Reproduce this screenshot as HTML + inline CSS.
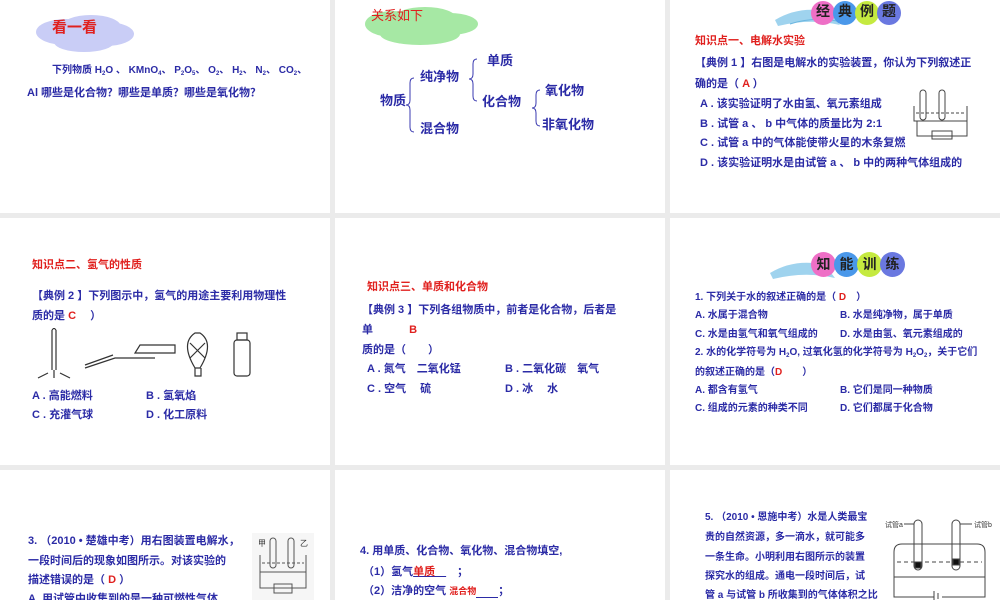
<!DOCTYPE html>
<html><head><meta charset="utf-8">
<style>
*{margin:0;padding:0;box-sizing:border-box}
body{width:1000px;height:600px;background:#ebebeb;position:relative;overflow:hidden;font-family:"Liberation Sans","Noto Sans CJK SC",sans-serif}
.p{position:absolute;background:#fff;overflow:hidden}
.t{position:absolute;white-space:nowrap;font-size:11px;color:#2b2ba6;line-height:1;font-weight:bold}
.r{color:#e0201e}
.big{font-size:13px}
sub{font-size:6px;vertical-align:-2px}
.c{position:absolute;border-radius:50%;color:#222;font-weight:bold;font-size:14px;text-align:center}
</style></head><body>
<!-- panel 1 -->
<div class="p" style="left:0;top:0;width:330px;height:213px">
 <svg style="position:absolute;left:36px;top:12px" width="100" height="42"><g fill="#c9cdf6"><ellipse cx="30" cy="20" rx="30" ry="13"/><ellipse cx="55" cy="15" rx="30" ry="12"/><ellipse cx="70" cy="22" rx="28" ry="12"/><ellipse cx="48" cy="30" rx="30" ry="10"/></g></svg>
 <div class="t r" style="left:52px;top:20px;font-size:15px">看一看</div>
 <div class="t" style="left:52px;top:66px;font-size:10px">下列物质 H<sub>2</sub>O 、 KMnO<sub>4</sub>、 P<sub>2</sub>O<sub>5</sub>、 O<sub>2</sub>、 H<sub>2</sub>、 N<sub>2</sub>、 CO<sub>2</sub>、</div>
 <div class="t" style="left:27px;top:88px">Al 哪些是化合物？哪些是单质？哪些是氧化物？</div>
</div>
<!-- panel 2 -->
<div class="p" style="left:335px;top:0;width:330px;height:213px">
 <svg style="position:absolute;left:30px;top:4px" width="115" height="42"><g fill="#a6e8a4"><ellipse cx="28" cy="20" rx="28" ry="13"/><ellipse cx="60" cy="15" rx="32" ry="12"/><ellipse cx="85" cy="20" rx="28" ry="11"/><ellipse cx="55" cy="30" rx="40" ry="11"/></g></svg>
 <div class="t r" style="left:36px;top:9px;font-size:13px;font-weight:normal">关系如下</div>
 <svg style="position:absolute;left:0;top:0" width="330" height="213" fill="none" stroke="#3a3ab0" stroke-width="1">
  <path d="M79 78 q-4 0 -4 5 v17 q0 5 -4 5 q4 0 4 5 v17 q0 5 4 5"/>
  <path d="M142 59 q-4 0 -4 5 v10 q0 5 -4 5 q4 0 4 5 v12 q0 5 4 5"/>
  <path d="M205 90 q-4 0 -4 5 v8 q0 5 -4 5 q4 0 4 5 v8 q0 5 4 5"/>
 </svg>
 <div class="t big" style="left:45px;top:94px">物质</div>
 <div class="t big" style="left:85px;top:70px">纯净物</div>
 <div class="t big" style="left:85px;top:122px">混合物</div>
 <div class="t big" style="left:152px;top:54px">单质</div>
 <div class="t big" style="left:147px;top:95px">化合物</div>
 <div class="t big" style="left:210px;top:84px">氧化物</div>
 <div class="t big" style="left:207px;top:118px">非氧化物</div>
</div>
<!-- panel 3 -->
<div class="p" style="left:670px;top:0;width:330px;height:213px">
 <svg style="position:absolute;left:100px;top:0" width="80" height="30"><path d="M5 20 Q30 5 60 12 L70 25 Q40 18 8 26 Z" fill="#9fd3ee"/><path d="M20 24 Q45 16 72 22" stroke="#6bb6e0" fill="none"/></svg>
 <div class="c" style="left:141px;top:1px;width:24px;height:24px;background:#ee6fc6">经</div>
 <div class="c" style="left:163px;top:1px;width:24px;height:24px;background:#4a98ea">典</div>
 <div class="c" style="left:185px;top:1px;width:24px;height:24px;background:#c5ea40">例</div>
 <div class="c" style="left:207px;top:1px;width:24px;height:24px;background:#6a78e0">题</div>
 <div class="t r" style="left:25px;top:36px">知识点一、电解水实验</div>
 <div class="t" style="left:25px;top:58px">【典例 1 】右图是电解水的实验装置，你认为下列叙述正</div>
 <div class="t" style="left:25px;top:79px">确的是（ <span class="r">A</span> ）</div>
 <div class="t" style="left:30px;top:99px">A . 该实验证明了水由氢、氧元素组成</div>
 <div class="t" style="left:30px;top:119px">B . 试管 a 、 b 中气体的质量比为 2:1</div>
 <div class="t" style="left:30px;top:138px">C . 试管 a 中的气体能使带火星的木条复燃</div>
 <div class="t" style="left:30px;top:158px">D . 该实验证明水是由试管 a 、 b 中的两种气体组成的</div>
 <svg style="position:absolute;left:242px;top:86px" width="60" height="56" fill="none" stroke="#444" stroke-width="1"><rect x="8" y="4" width="6" height="30" rx="3"/><rect x="27" y="4" width="6" height="30" rx="3"/><path d="M2 20 v15 h53 v-15"/><path d="M4 27 h50" stroke-dasharray="3 2"/><path d="M5 35 v15 h50 v-15"/><rect x="20" y="45" width="20" height="8"/></svg>
</div>
<!-- row 2 -->
<div class="p" style="left:0;top:218px;width:330px;height:247px">
 <div class="t r" style="left:32px;top:42px">知识点二、氢气的性质</div>
 <div class="t" style="left:32px;top:73px">【典例 2 】下列图示中，氢气的用途主要利用物理性</div>
 <div class="t" style="left:32px;top:93px">质的是 <span class="r">C</span>　 ）</div>
 <svg style="position:absolute;left:30px;top:110px" width="240" height="55" fill="none" stroke="#333" stroke-width="1.2">
  <path d="M22 2 v40 M26 2 v40 M22 2 l2 -2 l2 2 M18 45 l-10 5 M30 45 l10 5 M24 42 v8"/>
  <path d="M55 40 l30 -10 h40 M55 37 l28 -10 M105 25 h40 v-8 h-35 z"/>
  <path d="M165 5 q-15 10 0 35 h5 q15 -25 0 -35 z M165 40 v8 h6 v-8"/><path d="M160 15 l15 15 M175 15 l-15 15"/>
  <rect x="204" y="12" width="16" height="36" rx="3"/><rect x="207" y="5" width="10" height="7"/>
 </svg>
 <div class="t" style="left:32px;top:173px">A . 高能燃料</div>
 <div class="t" style="left:146px;top:173px">B . 氢氧焰</div>
 <div class="t" style="left:32px;top:192px">C . 充灌气球</div>
 <div class="t" style="left:146px;top:192px">D . 化工原料</div>
</div>
<div class="p" style="left:335px;top:218px;width:330px;height:247px">
 <div class="t r" style="left:32px;top:64px">知识点三、单质和化合物</div>
 <div class="t" style="left:27px;top:87px">【典例 3 】下列各组物质中，前者是化合物，后者是</div>
 <div class="t" style="left:27px;top:107px">单　　　 <span class="r">B</span></div>
 <div class="t" style="left:27px;top:127px">质的是（　　）</div>
 <div class="t" style="left:32px;top:146px">A . 氮气　二氧化锰</div>
 <div class="t" style="left:170px;top:146px">B . 二氧化碳　氧气</div>
 <div class="t" style="left:32px;top:166px">C . 空气　 硫</div>
 <div class="t" style="left:170px;top:166px">D . 冰　 水</div>
</div>
<div class="p" style="left:670px;top:218px;width:330px;height:247px">
 <svg style="position:absolute;left:95px;top:35px" width="80" height="30"><path d="M5 20 Q30 5 60 12 L70 25 Q40 18 8 26 Z" fill="#9fd3ee"/></svg>
 <div class="c" style="left:141px;top:34px;width:25px;height:25px;background:#ee6fc6;line-height:25px">知</div>
 <div class="c" style="left:164px;top:34px;width:25px;height:25px;background:#4a98ea;line-height:25px">能</div>
 <div class="c" style="left:187px;top:34px;width:25px;height:25px;background:#c5ea40;line-height:25px">训</div>
 <div class="c" style="left:210px;top:34px;width:25px;height:25px;background:#6a78e0;line-height:25px">练</div>
 <div class="t" style="left:25px;top:75px;font-size:10px">1. 下列关于水的叙述正确的是（ <span class="r">D</span>　）</div>
 <div class="t" style="left:25px;top:93px;font-size:10px">A. 水属于混合物</div>
 <div class="t" style="left:170px;top:93px;font-size:10px">B. 水是纯净物，属于单质</div>
 <div class="t" style="left:25px;top:112px;font-size:10px">C. 水是由氢气和氧气组成的</div>
 <div class="t" style="left:170px;top:112px;font-size:10px">D. 水是由氢、氧元素组成的</div>
 <div class="t" style="left:25px;top:130px;font-size:10px">2. 水的化学符号为 H<sub>2</sub>O, 过氧化氢的化学符号为 H<sub>2</sub>O<sub>2</sub>，关于它们</div>
 <div class="t" style="left:25px;top:150px;font-size:10px">的叙述正确的是（<span class="r">D</span>　　）</div>
 <div class="t" style="left:25px;top:168px;font-size:10px">A. 都含有氢气</div>
 <div class="t" style="left:170px;top:168px;font-size:10px">B. 它们是同一种物质</div>
 <div class="t" style="left:25px;top:186px;font-size:10px">C. 组成的元素的种类不同</div>
 <div class="t" style="left:170px;top:186px;font-size:10px">D. 它们都属于化合物</div>
</div>
<!-- row 3 -->
<div class="p" style="left:0;top:470px;width:330px;height:130px">
 <div class="t" style="left:28px;top:66px">3. （2010 • 楚雄中考）用右图装置电解水，</div>
 <div class="t" style="left:28px;top:86px">一段时间后的现象如图所示。对该实验的</div>
 <div class="t" style="left:28px;top:105px">描述错误的是（ <span class="r">D</span> ）</div>
 <div class="t" style="left:28px;top:124px">A. 用试管中收集到的是一种可燃性气体</div>
 <svg style="position:absolute;left:252px;top:63px" width="62" height="67" fill="none" stroke="#555" stroke-width="1"><rect x="0" y="0" width="62" height="67" fill="#f6f6f6" stroke="none"/><text x="6" y="13" font-size="8" fill="#333" stroke="none">甲</text><text x="48" y="13" font-size="8" fill="#333" stroke="none">乙</text><rect x="18" y="5" width="6" height="30" rx="3"/><rect x="36" y="5" width="6" height="30" rx="3"/><path d="M8 22 v17 h46 v-17"/><path d="M10 30 h42" stroke-dasharray="3 2"/><path d="M8 39 v16 h46 v-16"/><rect x="22" y="51" width="18" height="9"/></svg>
</div>
<div class="p" style="left:335px;top:470px;width:330px;height:130px">
 <div class="t" style="left:25px;top:76px">4. 用单质、化合物、氧化物、混合物填空,</div>
 <div class="t" style="left:28px;top:97px">（1）氢气<span class="r" style="text-decoration:underline;text-decoration-color:#2b2ba6">单质　</span>　；</div>
 <div class="t" style="left:28px;top:116px">（2）洁净的空气 <span class="r" style="font-size:9px">混合物</span><span style="border-bottom:1px solid #2b2ba6">　　</span>；</div>
</div>
<div class="p" style="left:670px;top:470px;width:330px;height:130px">
 <div class="t" style="left:35px;top:43px;font-size:10px">5. （2010 • 恩施中考）水是人类最宝</div>
 <div class="t" style="left:35px;top:63px;font-size:10px">贵的自然资源，多一滴水，就可能多</div>
 <div class="t" style="left:35px;top:83px;font-size:10px">一条生命。小明利用右图所示的装置</div>
 <div class="t" style="left:35px;top:102px;font-size:10px">探究水的组成。通电一段时间后，试</div>
 <div class="t" style="left:35px;top:121px;font-size:10px">管 a 与试管 b 所收集到的气体体积之比</div>
 <svg style="position:absolute;left:212px;top:47px" width="118" height="83" fill="none" stroke="#444" stroke-width="1"><rect x="0" y="0" width="118" height="83" fill="#fff" stroke="none"/><text x="3" y="10" font-size="7" fill="#333" stroke="none">试管a</text><text x="92" y="10" font-size="7" fill="#333" stroke="none">试管b</text><rect x="32" y="3" width="8" height="50" rx="4"/><rect x="70" y="3" width="8" height="50" rx="4"/><path d="M22 7 h10 M78 7 h12"/><path d="M12 35 q0 -8 8 -8 h75 q8 0 8 8 v25 h-91 z"/><path d="M15 45 h85" stroke-dasharray="4 3"/><rect x="33" y="45" width="6" height="6" fill="#111"/><rect x="71" y="42" width="6" height="6" fill="#111"/><path d="M12 60 v20 h40 M60 80 h43 v-20 M52 74 v10 M56 76 v6"/></svg>
</div>
</body></html>
